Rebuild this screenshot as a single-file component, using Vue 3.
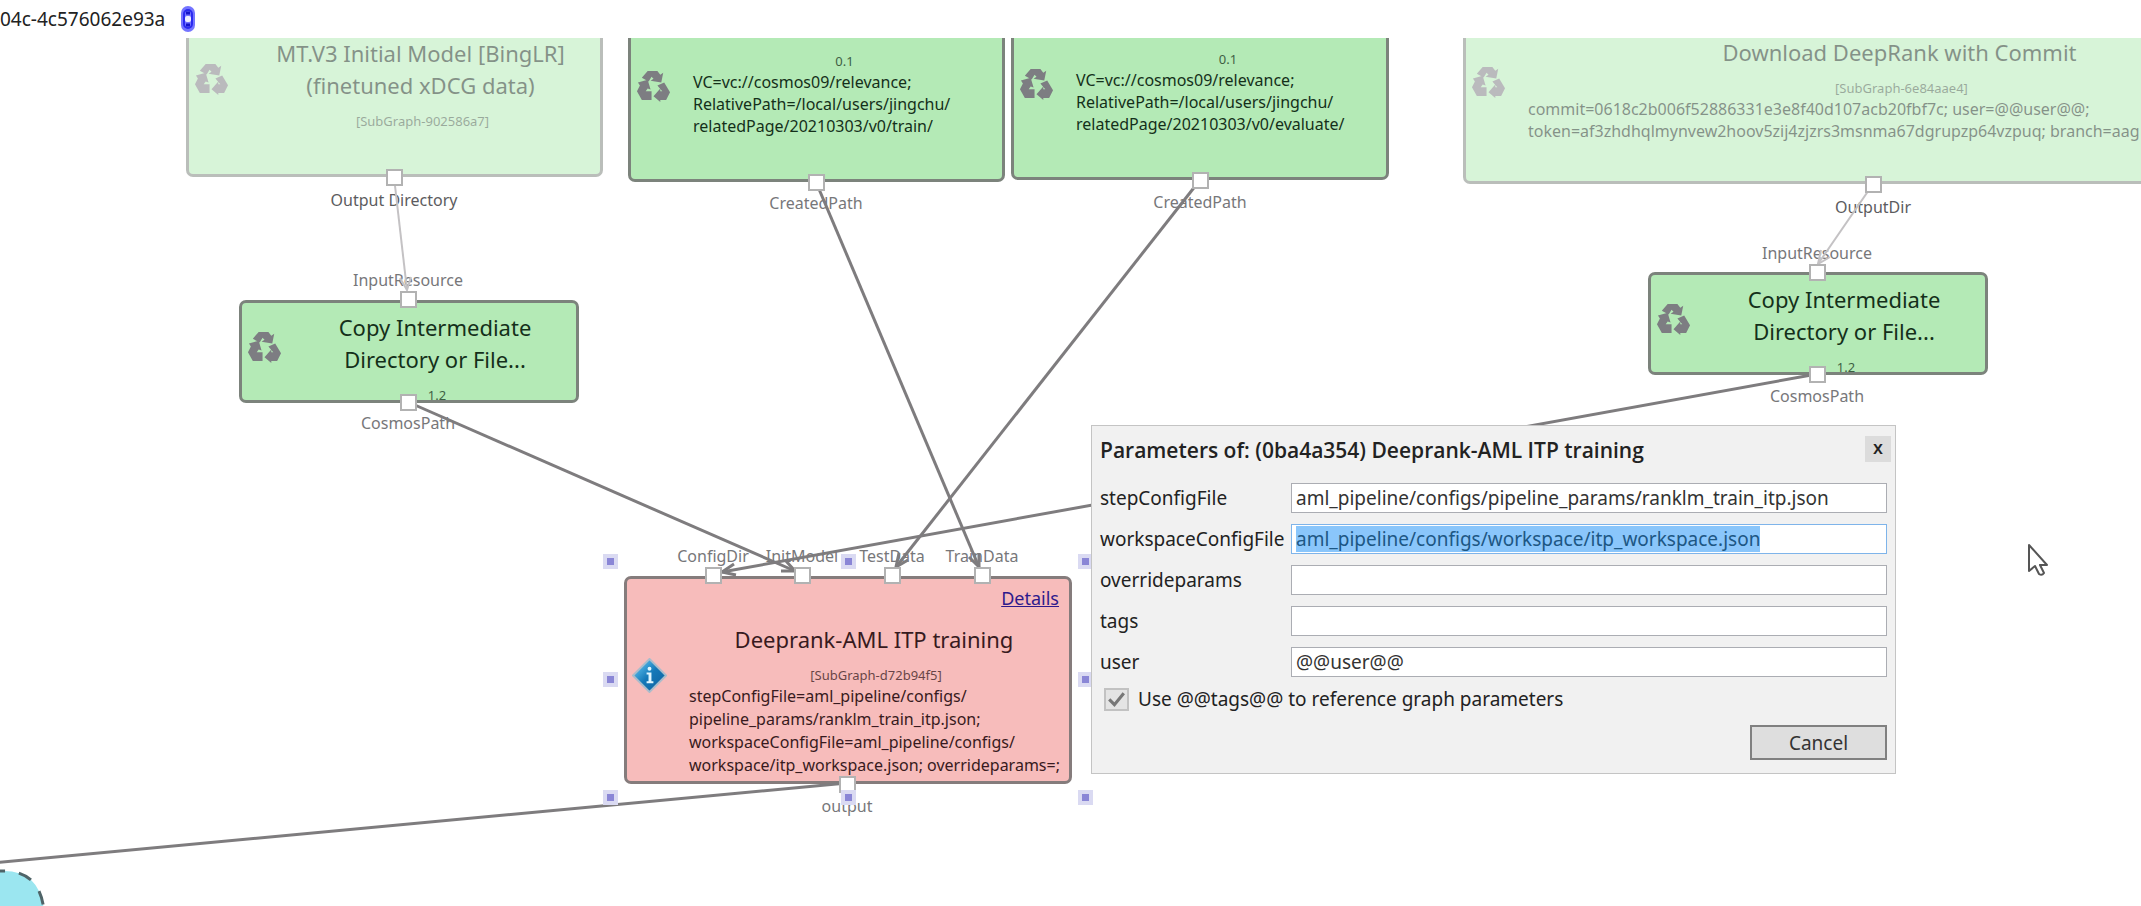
<script setup>
import { onMounted, ref } from 'vue'

const nodes = [
  { id: 'model', x: 186, y: -48, w: 417, h: 187, faded: true, subgraph: true, title: ['MT.V3 Initial Model [BingLR]', '(finetuned xDCG data)'], sub: '[SubGraph-902586a7]', lines: [] },
  { id: 'train', x: 628, y: -40, w: 377, h: 184, title: [''], sub: '0.1', lines: ['VC=vc://cosmos09/relevance;', 'RelativePath=/local/users/jingchu/', 'relatedPage/20210303/v0/train/'] },
  { id: 'evaluate', x: 1011, y: -42, w: 378, h: 184, title: [''], sub: '0.1', lines: ['VC=vc://cosmos09/relevance;', 'RelativePath=/local/users/jingchu/', 'relatedPage/20210303/v0/evaluate/'] },
  { id: 'download', x: 1463, y: -49, w: 821, h: 195, faded: true, subgraph: true, title: ['Download DeepRank with Commit'], sub: '[SubGraph-6e84aae4]', lines: ['commit=0618c2b006f52886331e3e8f40d107acb20fbf7c; user=@@user@@;', 'token=af3zhdhqlmynvew2hoov5zij4zjzrs3msnma67dgrupzp64vzpuq; branch=aag'] },
  { id: 'copy-left', x: 239, y: 262, w: 340, h: 103, title: ['Copy Intermediate', 'Directory or File...'], sub: '1.2', lines: [] },
  { id: 'copy-right', x: 1648, y: 234, w: 340, h: 103, title: ['Copy Intermediate', 'Directory or File...'], sub: '1.2', lines: [] },
  { id: 'training', x: 624, y: 538, w: 448, h: 208, selected: true, subgraph: true, title: ['Deeprank-AML ITP training'], sub: '[SubGraph-d72b94f5]', lines: ['stepConfigFile=aml_pipeline/configs/', 'pipeline_params/ranklm_train_itp.json;', 'workspaceConfigFile=aml_pipeline/configs/', 'workspace/itp_workspace.json; overrideparams=;'] }
]

// Ports: centre of the square, and the centre line of its caption.
const ports = [
  { x: 394, y: 139, label: 'Output Directory', ly: 162, dark: true },
  { x: 816, y: 144, label: 'CreatedPath', ly: 165 },
  { x: 1200, y: 142, label: 'CreatedPath', ly: 164 },
  { x: 1873, y: 146, label: 'OutputDir', ly: 169, dark: true },
  { x: 408, y: 261, label: 'InputResource', ly: 242 },
  { x: 408, y: 364, label: 'CosmosPath', ly: 385 },
  { x: 1817, y: 234, label: 'InputResource', ly: 215 },
  { x: 1817, y: 336, label: 'CosmosPath', ly: 358 },
  { x: 713, y: 537, label: 'ConfigDir', ly: 518 },
  { x: 802, y: 537, label: 'InitModel', ly: 518 },
  { x: 892, y: 537, label: 'TestData', ly: 518 },
  { x: 982, y: 537, label: 'TrainData', ly: 518 },
  { x: 847, y: 746, label: 'output', ly: 768 }
]

const edges = [
  { from: [394, 139], to: [407, 252], faded: true },
  { from: [1873, 146], to: [1818, 226], faded: true },
  { from: [816, 144], to: [979, 529] },
  { from: [1200, 142], to: [896, 529] },
  { from: [408, 364], to: [795, 533] },
  { from: [1817, 336], to: [722, 534] },
  { from: [847, 745], to: [-40, 828], plain: true }
]

const arrow = ({ from, to }) => {
  const a = Math.atan2(to[1] - from[1], to[0] - from[0])
  const tip = (s) => `${Math.round(to[0] - 14 * Math.cos(a + s))},${Math.round(to[1] - 14 * Math.sin(a + s))}`
  return `${tip(0.42)} ${to.join(',')} ${tip(-0.42)}`
}

const handles = [610, 848, 1085].flatMap((x) => [523, 641, 759].map((y) => ({ x, y }))).filter((p) => !(p.x === 848 && p.y === 641))

const at = (p) => ({ left: p.x + 'px', top: p.y + 'px' })
const box = (n) => ({ ...at(n), width: n.w + 'px', height: n.h + 'px' })

const fields = ref([
  { name: 'stepConfigFile', value: 'aml_pipeline/configs/pipeline_params/ranklm_train_itp.json' },
  { name: 'workspaceConfigFile', value: 'aml_pipeline/configs/workspace/itp_workspace.json' },
  { name: 'overrideparams', value: '' },
  { name: 'tags', value: '' },
  { name: 'user', value: '@@user@@' }
])
const useTags = ref(true)
const form = ref(null)

onMounted(() => {
  const input = form.value.querySelector('#field-workspaceConfigFile')
  input.focus()
  input.select()
})
</script>

<template>
  <div class="app">
    <header class="bar">
      <span>04c-4c576062e93a</span>
      <svg class="clip" viewBox="0 0 16 28" aria-hidden="true">
        <rect x="1" y="1" width="14" height="26" rx="7" fill="#7474ff" />
        <rect x="4" y="5" width="8" height="18" rx="4" fill="none" stroke="#2a2af0" stroke-width="2" />
        <path d="M6 8 H10 M6 20 H10" stroke="#1414c8" stroke-width="3" />
        <rect x="5" y="11" width="6" height="6" rx="2" fill="#eef" />
      </svg>
    </header>

    <main class="canvas">
      <section v-for="n in nodes" :key="n.id" class="node" :class="{ faded: n.faded, selected: n.selected }" :style="box(n)">
        <svg v-if="n.selected" class="icon" viewBox="0 0 36 36" aria-hidden="true">
          <defs>
            <linearGradient id="info" x1="0" y1="0" x2="1" y2="1">
              <stop offset="0.2" stop-color="#4fb3e4" />
              <stop offset="0.5" stop-color="#1478b8" />
              <stop offset="1" stop-color="#0f5f9c" />
            </linearGradient>
          </defs>
          <path d="M18 1 L35 18 L18 35 L1 18 Z" fill="url(#info)" stroke="#a9bccb" stroke-width="2" />
          <circle cx="18" cy="11" r="2" fill="#dff6ff" />
          <path d="M15 15 H20 V24 H22 V26 H15 V24 H17 V17 H15 Z" fill="#dff6ff" />
        </svg>
        <svg v-else class="icon" viewBox="0 0 36 34" aria-hidden="true">
          <g fill="#7d7d82">
            <path d="M12 2 H22 L25 6 L28 4 L26 14 L15 12 L18 10 L16 8 L13 13 L6 9 Z" />
            <path d="M29 14 L35 24 L31 32 H25 V34 L18 28 L25 20 V23 H27 L22 17 Z" />
            <path d="M2 14 L12 11 L15 21 L12 20 L10 23 H16 V32 H6 L1 23 L4 17 Z" />
          </g>
        </svg>
        <div class="body">
          <div v-if="n.subgraph" class="details"><a v-if="n.selected" href="#details">Details</a></div>
          <h2>
            <span v-for="t in n.title" :key="t">{{ t }}</span>
          </h2>
          <p class="sub">{{ n.sub }}</p>
          <p v-for="l in n.lines" :key="l" class="line">{{ l }}</p>
        </div>
      </section>

      <svg class="storage" viewBox="0 0 50 90" aria-hidden="true">
        <path d="M-10 2 H4 Q40 2 44 42 V100 H-10 Z" fill="#9be6f0" />
        <path d="M-10 2 H4 Q40 2 44 42 V100" fill="none" stroke="#4f6468" stroke-width="3" stroke-dasharray="14 14" stroke-dashoffset="-1" />
      </svg>

      <span v-for="p in ports" :key="'l' + p.x + p.y" class="caption" :class="{ dark: p.dark }" :style="at({ x: p.x, y: p.ly })">{{ p.label }}</span>

      <svg class="edges" aria-hidden="true">
        <g v-for="(e, i) in edges" :key="i" :class="{ faint: e.faded }">
          <line :x1="e.from[0]" :y1="e.from[1]" :x2="e.to[0]" :y2="e.to[1]" />
          <polyline v-if="!e.plain" :points="arrow(e)" />
        </g>
      </svg>

      <i v-for="p in ports" :key="'p' + p.x + p.y" class="port" :style="at(p)"></i>
      <i v-for="(h, i) in handles" :key="'h' + i" class="handle" :style="at(h)"></i>

      <form ref="form" class="dialog" @submit.prevent>
        <div class="dialog-head">
          <h1>Parameters of: (0ba4a354) Deeprank-AML ITP training</h1>
          <button type="button" class="close" aria-label="Close">x</button>
        </div>
        <div class="fields">
          <template v-for="f in fields" :key="f.name">
            <label :for="'field-' + f.name">{{ f.name }}</label>
            <input :id="'field-' + f.name" v-model="f.value" type="text" spellcheck="false" autocomplete="off" />
          </template>
        </div>
        <div class="check">
          <span class="tick">
            <input id="use-tags" v-model="useTags" type="checkbox" />
            <svg v-if="useTags" viewBox="0 0 24 22" aria-hidden="true"><path d="M5 11 L10 16 L19 5" fill="none" stroke="#777" stroke-width="3" /></svg>
          </span>
          <label for="use-tags">Use @@tags@@ to reference graph parameters</label>
        </div>
        <div class="actions"><button type="button" class="cancel">Cancel</button></div>
      </form>

      <svg class="cursor" viewBox="0 0 22 34" aria-hidden="true">
        <path d="M2 2 V28 L8 23 L12 31 Q15 33 17 30 L13 22 H20 Z" fill="#fff" stroke="#555" stroke-width="2" stroke-linejoin="round" />
      </svg>
    </main>
  </div>
</template>

<style>
body {
  margin: 0;
  background: #fff;
  overflow: hidden;
}
</style>

<style scoped>
.app {
  display: flex;
  flex-direction: column;
  height: 100vh;
  background: #fff;
  color: #222;
  font-family: "Noto Sans", "Open Sans", sans-serif;
}
.bar {
  display: flex;
  align-items: center;
  gap: 15px;
  flex: none;
  height: 38px;
  font-size: 19px;
  white-space: nowrap;
}
.clip {
  width: 16px;
  height: 28px;
}
.canvas {
  position: relative;
  flex: 1;
  overflow: hidden;
}
.node {
  position: absolute;
  box-sizing: border-box;
  display: flex;
  align-items: center;
  gap: 22px;
  padding: 0 10px 0 5px;
  border: 3px solid #7c837c;
  border-radius: 7px;
  background: #b4eab6;
  color: #14301a;
  overflow: hidden;
}
.node.selected {
  border-color: #857c7c;
  background: #f7bcbb;
  color: #371a20;
}
.node.faded {
  opacity: 0.52;
}
.icon {
  flex: none;
  width: 35px;
  height: 35px;
  margin-bottom: 10px;
}
.body {
  flex: 1;
  align-self: flex-start;
  min-width: 0;
  padding-top: 8px;
}
.details {
  height: 22px;
  margin-bottom: 14px;
  font-size: 18px;
  line-height: 22px;
  text-align: right;
}
.details a {
  color: #2e1a8c;
}
h2 {
  min-height: 32px;
  margin: 0 0 10px;
  font-size: 22px;
  font-weight: 400;
  line-height: 32px;
  text-align: center;
}
h2 span {
  display: block;
  white-space: nowrap;
}
.sub {
  margin: 0;
  padding-left: 4px;
  font-size: 13px;
  line-height: 20px;
  text-align: center;
  opacity: 0.75;
}
.line {
  margin: 0;
  font-size: 16px;
  line-height: 22px;
  white-space: nowrap;
}
.selected .line {
  line-height: 23px;
}
.storage {
  position: absolute;
  left: 0;
  top: 831px;
  width: 50px;
  height: 90px;
}
.caption {
  position: absolute;
  transform: translate(-50%, -50%);
  color: #77777a;
  font-size: 16px;
  line-height: 22px;
  white-space: nowrap;
}
.caption.dark {
  color: #5c5c60;
}
.edges {
  position: absolute;
  inset: 0;
  width: 100%;
  height: 100%;
  fill: none;
  stroke: #7e7c7e;
  stroke-width: 3;
}
.faint {
  stroke: #c4c2c4;
  stroke-width: 2;
}
.port {
  position: absolute;
  box-sizing: border-box;
  width: 17px;
  height: 17px;
  margin: -8px 0 0 -8px;
  border: 2px solid #b2b2b2;
  background: #fff;
}
.handle {
  position: absolute;
  box-sizing: border-box;
  width: 15px;
  height: 15px;
  margin: -7px 0 0 -7px;
  border: 4px solid #dadaf2;
  background: #8a86d6;
}
.dialog {
  position: absolute;
  left: 1091px;
  top: 387px;
  box-sizing: border-box;
  width: 805px;
  padding: 10px 8px 13px;
  border: 1px solid #c4c4c4;
  background: #f1f1f1;
  font-size: 19px;
  line-height: 26px;
}
.dialog-head {
  display: flex;
  justify-content: space-between;
  align-items: flex-start;
  margin: 0 -4px 19px 0;
}
h1 {
  margin: 0;
  font-family: "Open Sans", "Noto Sans", sans-serif;
  font-size: 21px;
  font-weight: 600;
  line-height: 28px;
}
.close {
  width: 26px;
  height: 26px;
  padding: 0 0 4px;
  border: 0;
  background: #dcdcdc;
  color: #222;
  font: 600 18px/22px "Open Sans", sans-serif;
}
.fields {
  display: grid;
  grid-template-columns: 187px 1fr;
  column-gap: 4px;
  row-gap: 11px;
  align-items: center;
}
.fields label {
  line-height: 28px;
}
.fields input {
  box-sizing: border-box;
  width: 100%;
  height: 30px;
  padding: 0 4px;
  border: 1px solid #abadb3;
  outline: 0;
  background: #fff;
  color: #333;
  font: inherit;
  line-height: 28px;
}
.fields input:focus {
  border-color: #7eb4ea;
}
.fields input::selection {
  background: #8ac6fb;
  color: #1d5784;
}
.check {
  display: flex;
  align-items: center;
  gap: 9px;
  padding: 9px 0 0 4px;
}
.tick {
  position: relative;
  width: 25px;
  height: 23px;
}
.tick input {
  appearance: none;
  display: block;
  box-sizing: border-box;
  width: 25px;
  height: 23px;
  margin: 0;
  border: 2px solid #c2c2c2;
  background: #e4e4e4;
}
.tick svg {
  position: absolute;
  inset: 0;
  pointer-events: none;
}
.actions {
  display: flex;
  justify-content: flex-end;
  margin-top: 13px;
}
.cancel {
  width: 137px;
  height: 35px;
  padding: 0;
  border: 2px solid #808080;
  background: #dedede;
  color: #333;
  font: inherit;
}
.cursor {
  position: absolute;
  left: 2027px;
  top: 505px;
  width: 22px;
  height: 34px;
}
</style>
